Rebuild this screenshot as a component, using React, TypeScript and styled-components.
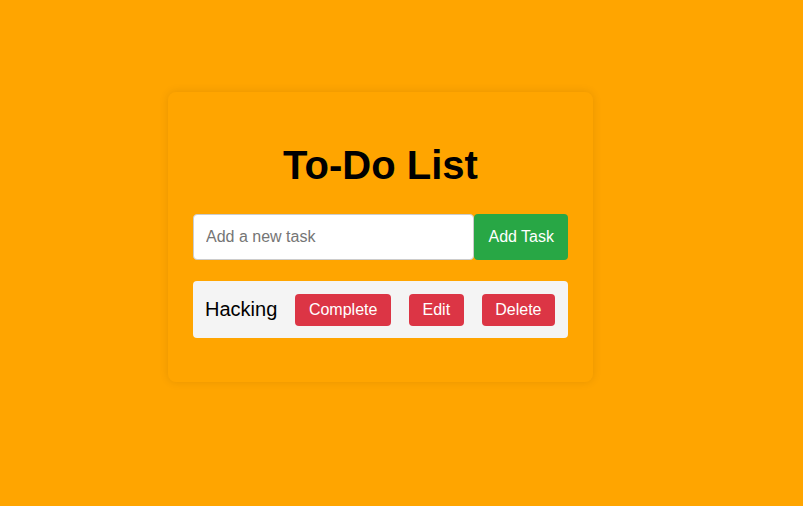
import React from "react";
import styled, { createGlobalStyle } from "styled-components";

const GlobalStyle = createGlobalStyle`
  html, body {
    margin: 0;
    padding: 0;
    background: #ffa500;
    font-family: "Liberation Sans", Arial, sans-serif;
  }
  * { box-sizing: border-box; }
`;

const Page = styled.div`
  min-height: 506px;
  padding: 92px 0 0 168px;
`;

const Card = styled.div`
  width: 425px;
  height: 290px;
  padding: 20px 25px 0 25px;
  background: #ffa500;
  border-radius: 8px;
  box-shadow: 0 0 10px rgba(0, 0, 0, 0.1);
  display: flex;
  flex-direction: column;
`;

const Title = styled.h1`
  margin: 30px 0 26px;
  height: 46px;
  line-height: 46px;
  font-size: 40px;
  font-weight: bold;
  text-align: center;
  color: #000;
`;

const InputRow = styled.div`
  display: flex;
  height: 46px;
  margin-bottom: 21px;
`;

const TaskInput = styled.input`
  flex: 1;
  min-width: 0;
  height: 46px;
  padding: 0 12px;
  font-family: inherit;
  font-size: 16px;
  border: 1px solid #ccc;
  border-radius: 4px;
  background: #fff;
  outline: none;
  &::placeholder { color: #757575; }
`;

const Button = styled.button<{ $tone: "green" | "red" }>`
  font-family: inherit;
  font-size: 16px;
  color: #fff;
  border: none;
  border-radius: 4px;
  padding: 7px 13.5px;
  line-height: 18px;
  cursor: pointer;
  background: ${(p) => (p.$tone === "green" ? "#28a745" : "#dc3545")};
`;

const AddButton = styled(Button)`
  height: 46px;
  padding: 0 14px;
`;

const TaskList = styled.ul`
  list-style: none;
  margin: 0;
  padding: 0;
`;

const TaskItem = styled.li`
  display: flex;
  align-items: center;
  justify-content: space-between;
  height: 57px;
  padding: 0 13px 0 12px;
  background: #f4f4f4;
  border-radius: 4px;
`;

const TaskText = styled.span`
  font-size: 20px;
  color: #000;
`;

export default function App() {
  return (
    <>
      <GlobalStyle />
      <Page>
        <Card>
          <Title>To-Do List</Title>
          <InputRow>
            <TaskInput placeholder="Add a new task" />
            <AddButton $tone="green">Add Task</AddButton>
          </InputRow>
          <TaskList>
            <TaskItem>
              <TaskText>Hacking</TaskText>
              <Button $tone="red">Complete</Button>
              <Button $tone="red">Edit</Button>
              <Button $tone="red">Delete</Button>
            </TaskItem>
          </TaskList>
        </Card>
      </Page>
    </>
  );
}
